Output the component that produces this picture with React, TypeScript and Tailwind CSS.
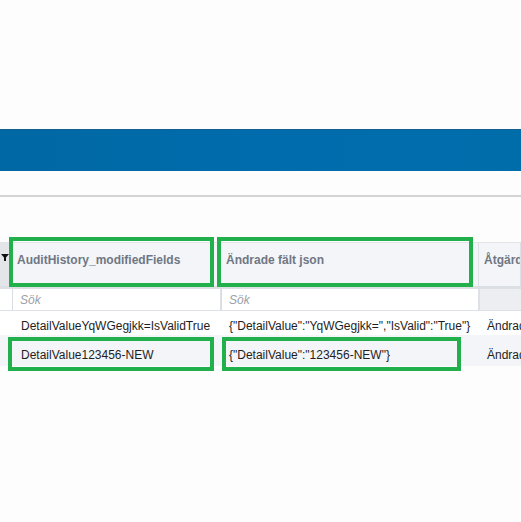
import { ReactNode } from "react";

const font = { fontFamily: '"Liberation Sans", Arial, sans-serif' };

const rows = [
  {
    fields: "DetailValueYqWGegjkk=IsValidTrue",
    json: '{"DetailValue":"YqWGegjkk=","IsValid":"True"}',
    action: "Ändrad",
    alt: false,
  },
  {
    fields: "DetailValue123456-NEW",
    json: '{"DetailValue":"123456-NEW"}',
    action: "Ändrad",
    alt: true,
  },
];

const HeadCell = ({ children }: { children?: ReactNode }) => (
  <div className="overflow-hidden whitespace-nowrap border-r border-[#dde0e5] bg-[#f3f5f8] px-[5px] pt-[8px] text-[12px] font-bold text-[#707784]">
    {children}
  </div>
);

const FilterCell = () => (
  <div className="border-r border-[#dde0e5] bg-white">
    <div className="flex h-full items-center border-l border-[#d9dce1] px-[7px] text-[12px] italic text-[#9aa0a8]">
      Sök
    </div>
  </div>
);

// green annotation frames drawn over the grid
const Frame = ({ className }: { className: string }) => (
  <div className={`pointer-events-none absolute border-[4px] border-[#21b04b] ${className}`} />
);

export default function App() {
  return (
    <div className="relative h-[522px] w-[521px] overflow-hidden bg-[#fdfdfd]" style={font}>
      <div className="h-[129px]" />

      {/* top bar */}
      <div className="h-[42px] border-t border-[#135f8f] bg-gradient-to-r from-[#0068a3] via-[#006cad] to-[#006dab]" />

      {/* toolbar strip */}
      <div className="h-[26px] border-b-[2px] border-[#d4d4d4]" />

      <div className="h-[45px]" />

      {/* grid */}
      <div className="grid grid-cols-[12px_209px_258px_1fr]">
        {/* header */}
        <div className="col-span-4 grid h-[47px] grid-cols-subgrid border-t border-b-[3px] border-t-[#e2e4e8] border-b-[#dcdfe4]">
          <div className="flex items-start justify-start bg-[#e3e5e9] pt-[11px] pl-[1px]">
            <svg width="8" height="7" viewBox="0 0 8 7">
              <path d="M0 0H8L5 3.4V7H3V3.4Z" fill="#111" />
            </svg>
          </div>
          <HeadCell>AuditHistory_modifiedFields</HeadCell>
          <HeadCell>Ändrade fält json</HeadCell>
          <HeadCell>Åtgärd</HeadCell>
        </div>

        {/* filter row */}
        <div className="col-span-4 grid h-[22px] grid-cols-subgrid border-b border-[#dde0e5]">
          <div className="bg-white" />
          <FilterCell />
          <FilterCell />
          <div className="border-l border-[#dde0e5] bg-[#eceef2]" />
        </div>

        {/* data rows */}
        {rows.map((r) => (
          <div
            key={r.fields}
            className={`col-span-4 grid grid-cols-subgrid text-[12px] text-[#1e1e1e] ${
              r.alt ? "h-[31px] bg-[#f3f5f9] pt-[11px]" : "h-[24px] bg-white pt-[6px]"
            }`}
          >
            <div />
            <div className="whitespace-nowrap pl-[9px]">{r.fields}</div>
            <div className="whitespace-nowrap pl-[8px]">{r.json}</div>
            <div className="overflow-hidden whitespace-nowrap pl-[8px]">{r.action}</div>
          </div>
        ))}
      </div>

      <Frame className="left-[9px] top-[237px] h-[50px] w-[205px]" />
      <Frame className="left-[217px] top-[237px] h-[50px] w-[256px]" />
      <Frame className="left-[8px] top-[337px] h-[34px] w-[206px]" />
      <Frame className="left-[222px] top-[337px] h-[34px] w-[239px]" />
    </div>
  );
}
